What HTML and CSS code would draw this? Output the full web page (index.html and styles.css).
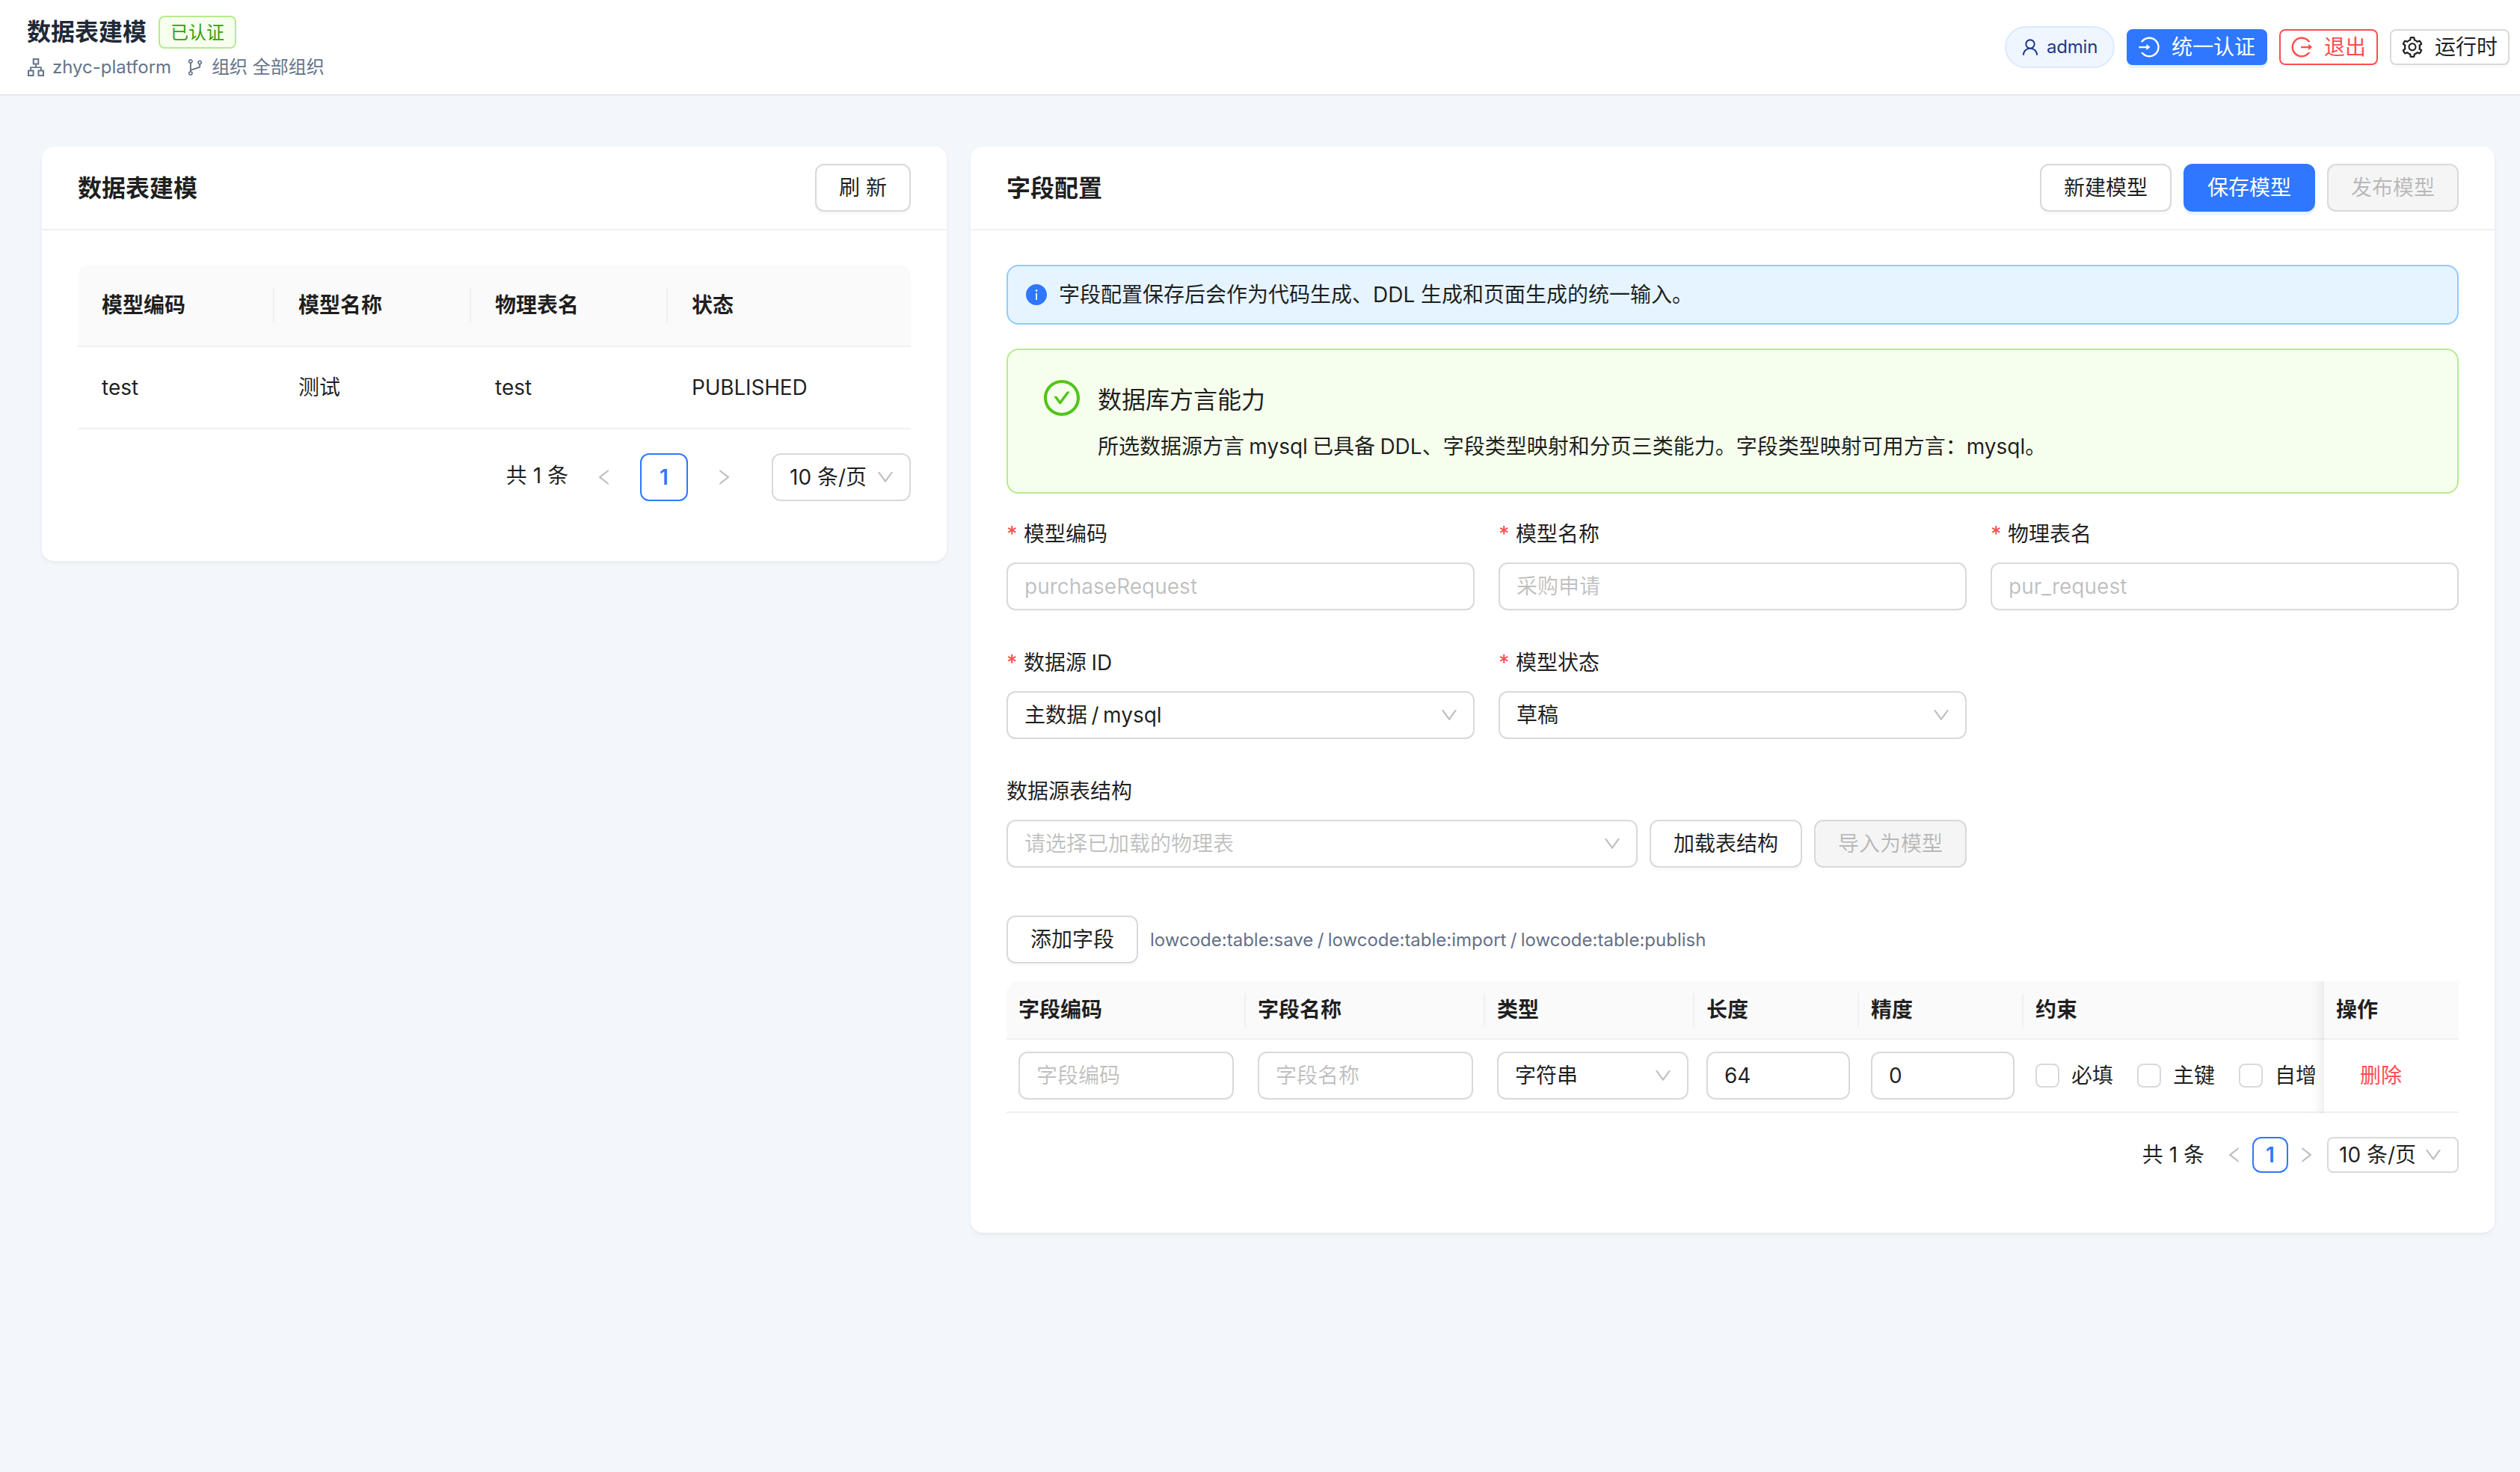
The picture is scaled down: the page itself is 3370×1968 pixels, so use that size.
FILE: index.html
```html
<!DOCTYPE html>
<html lang="zh-CN">
<head>
<meta charset="utf-8">
<title>数据表建模</title>
<link rel="stylesheet" href="styles.css">
</head>
<body>
<svg class="sprite" aria-hidden="true">
  <symbol id="i-down" viewBox="64 64 896 896"><path d="M884 256h-75c-5.1 0-9.9 2.5-12.9 6.6L512 654.2 227.9 262.6c-3-4.1-7.8-6.6-12.9-6.6h-75c-6.5 0-10.3 7.4-6.5 12.7l352.6 486.1c12.8 17.6 39 17.6 51.7 0l352.6-486.1c3.9-5.3.1-12.7-6.4-12.7z"/></symbol>
  <symbol id="i-left" viewBox="64 64 896 896"><path d="M724 218.3V141c0-6.7-7.7-10.4-12.9-6.3L260.3 486.8a31.86 31.86 0 000 50.3l450.8 352.1c5.3 4.1 12.9.4 12.9-6.3v-77.3c0-4.9-2.3-9.6-6.1-12.6l-360-281 360-281.1c3.8-3 6.1-7.7 6.1-12.6z"/></symbol>
  <symbol id="i-right" viewBox="64 64 896 896"><path d="M765.7 486.8L314.9 134.7A7.97 7.97 0 00302 141v77.3c0 4.9 2.3 9.6 6.1 12.6l360 281.1-360 281.1c-3.9 3-6.1 7.7-6.1 12.6V883c0 6.7 7.7 10.4 12.9 6.3l450.8-352.1a31.96 31.96 0 000-50.4z"/></symbol>
  <symbol id="i-info" viewBox="64 64 896 896"><path d="M512 64C264.6 64 64 264.6 64 512s200.6 448 448 448 448-200.6 448-448S759.4 64 512 64zm32 664c0 4.4-3.6 8-8 8h-48c-4.4 0-8-3.6-8-8V456c0-4.4 3.6-8 8-8h48c4.4 0 8 3.6 8 8v272zm-32-344a48.01 48.01 0 010-96 48.01 48.01 0 010 96z"/></symbol>
  <symbol id="i-check" viewBox="64 64 896 896"><path d="M699 353h-46.9c-10.2 0-19.9 4.9-25.9 13.3L469 584.3l-71.2-98.8c-6-8.3-15.6-13.3-25.9-13.3H325c-6.5 0-10.3 7.4-6.5 12.7l124.6 172.8a31.8 31.8 0 0051.7 0l210.6-292c3.9-5.3.1-12.7-6.4-12.7z"/><path d="M512 64C264.6 64 64 264.6 64 512s200.6 448 448 448 448-200.6 448-448S759.4 64 512 64zm0 820c-205.4 0-372-166.6-372-372s166.6-372 372-372 372 166.6 372 372-166.6 372-372 372z"/></symbol>
  <symbol id="i-user" viewBox="64 64 896 896"><path d="M858.5 763.6a374 374 0 00-80.6-119.5 375.63 375.63 0 00-119.5-80.6c-.4-.2-.8-.3-1.2-.5C719.5 518 760 444.7 760 362c0-137-111-248-248-248S264 225 264 362c0 82.7 40.5 156 102.8 201.1-.4.2-.8.3-1.2.5-44.8 18.9-85 46-119.5 80.6a375.63 375.63 0 00-80.6 119.5A371.7 371.7 0 00136 901.8a8 8 0 008 8.2h60c4.4 0 7.9-3.5 8-7.8 2-77.2 33-149.5 87.8-204.3 56.7-56.7 132-87.9 212.2-87.9s155.5 31.2 212.2 87.9C779 752.7 810 825 812 902.2c.1 4.4 3.6 7.8 8 7.8h60a8 8 0 008-8.2c-1-47.8-10.9-94.3-29.5-138.2zM512 534c-45.9 0-89.1-17.9-121.6-50.4S340 407.9 340 362c0-45.9 17.9-89.1 50.4-121.6S466.1 190 512 190s89.1 17.9 121.6 50.4S684 316.1 684 362c0 45.9-17.9 89.1-50.4 121.6S557.9 534 512 534z"/></symbol>
  <symbol id="i-login" viewBox="64 64 896 896"><path d="M521.7 82c-152.5-.4-286.7 78.5-363.4 197.7-3.4 5.3.4 12.3 6.7 12.3h70.3c4.8 0 9.3-2.1 12.3-5.8 7-8.5 14.5-16.7 22.4-24.5 32.6-32.5 70.5-58.1 112.7-75.9 43.6-18.4 90-27.8 137.9-27.8 47.9 0 94.3 9.3 137.9 27.8 42.2 17.8 80.1 43.4 112.7 75.9 32.6 32.5 58.1 70.4 76 112.5C865.7 417.8 875 464.1 875 512c0 47.9-9.4 94.2-27.8 137.8-17.8 42.1-43.4 80-76 112.5s-70.5 58.1-112.7 75.9A352.8 352.8 0 01520.6 866c-47.9 0-94.3-9.4-137.9-27.8A353.84 353.84 0 01270 762.3c-7.9-7.9-15.3-16.1-22.4-24.5-3-3.7-7.6-5.8-12.3-5.8H165c-6.3 0-10.2 7-6.7 12.3C234.9 863.2 368.5 942 520.6 942c236.2 0 428-190.1 430.4-425.6C953.4 277.1 761.3 82.6 521.7 82zM395.02 624v-76h-314c-4.4 0-8-3.6-8-8v-56c0-4.4 3.6-8 8-8h314v-76c0-6.7 7.8-10.5 13-6.3l141.9 112a8 8 0 010 12.6l-141.9 112c-5.2 4.1-13 .4-13-6.3z"/></symbol>
  <symbol id="i-logout" viewBox="64 64 896 896"><path d="M868 732h-70.3c-4.8 0-9.3 2.1-12.3 5.8-7 8.5-14.5 16.7-22.4 24.5a353.84 353.84 0 01-112.7 75.9A352.8 352.8 0 01512.4 866c-47.9 0-94.3-9.4-137.9-27.8a353.84 353.84 0 01-112.7-75.9 353.28 353.28 0 01-76-112.5C167.3 606.2 158 559.9 158 512s9.4-94.2 27.8-137.8c17.8-42.1 43.4-80 76-112.5s70.5-58.1 112.7-75.9c43.6-18.4 90-27.8 137.9-27.8 47.9 0 94.3 9.3 137.9 27.8 42.2 17.8 80.1 43.4 112.7 75.9 7.9 7.9 15.3 16.1 22.4 24.5 3 3.7 7.6 5.8 12.3 5.8H868c6.3 0 10.2-7 6.7-12.3C798 160.5 663.8 81.6 511.3 82 271.7 82.6 79.6 277.1 82 516.4 84.4 751.9 276.2 942 512.4 942c152.1 0 285.7-78.8 362.3-197.7 3.4-5.3-.4-12.3-6.7-12.3zm88.9-226.3L815 393.7c-5.3-4.2-13-.4-13 6.3v76H488c-4.4 0-8 3.6-8 8v56c0 4.4 3.6 8 8 8h314v76c0 6.7 7.8 10.5 13 6.3l141.9-112a8 8 0 000-12.6z"/></symbol>
  <symbol id="i-setting" viewBox="64 64 896 896"><path d="M924.8 625.7l-65.5-56c3.1-19 4.7-38.4 4.7-57.8s-1.6-38.8-4.7-57.8l65.5-56a32.03 32.03 0 009.3-35.2l-.9-2.6a443.74 443.74 0 00-79.7-137.9l-1.8-2.1a32.12 32.12 0 00-35.1-9.5l-81.3 28.9c-30-24.6-63.5-44-99.7-57.6l-15.7-85a32.05 32.05 0 00-25.8-25.7l-2.7-.5c-52.1-9.4-106.9-9.4-159 0l-2.7.5a32.05 32.05 0 00-25.8 25.7l-15.8 85.4a351.86 351.86 0 00-99 57.4l-81.9-29.1a32 32 0 00-35.1 9.5l-1.8 2.1a446.02 446.02 0 00-79.7 137.9l-.9 2.6c-4.5 12.5-.8 26.5 9.3 35.2l66.3 56.6c-3.1 18.8-4.6 38-4.6 57.1 0 19.2 1.5 38.4 4.6 57.1L99 625.5a32.03 32.03 0 00-9.3 35.2l.9 2.6c18.1 50.4 44.9 96.9 79.7 137.9l1.8 2.1a32.12 32.12 0 0035.1 9.5l81.9-29.1c29.8 24.5 63.1 43.9 99 57.4l15.8 85.4a32.05 32.05 0 0025.8 25.7l2.7.5a449.4 449.4 0 00159 0l2.7-.5a32.05 32.05 0 0025.8-25.7l15.7-85a350 350 0 0099.7-57.6l81.3 28.9a32 32 0 0035.1-9.5l1.8-2.1c34.8-41.1 61.6-87.5 79.7-137.9l.9-2.6c4.5-12.3.8-26.3-9.3-35zM788.3 465.9c2.5 15.1 3.8 30.6 3.8 46.1s-1.3 31-3.8 46.1l-6.6 40.1 74.7 63.9a370.03 370.03 0 01-42.6 73.6L721 702.8l-31.4 25.8c-23.9 19.6-50.5 35-79.3 45.8l-38.1 14.3-17.9 97a377.5 377.5 0 01-85 0l-17.9-97.2-37.8-14.5c-28.5-10.8-55-26.2-78.7-45.7l-31.4-25.9-93.4 33.2c-17-22.9-31.2-47.6-42.6-73.6l75.5-64.5-6.5-40c-2.4-14.9-3.7-30.3-3.7-45.5 0-15.3 1.2-30.6 3.7-45.5l6.5-40-75.5-64.5c11.3-26.1 25.6-50.7 42.6-73.6l93.4 33.2 31.4-25.9c23.7-19.5 50.2-34.9 78.7-45.7l37.9-14.3 17.9-97.2c28.1-3.2 56.8-3.2 85 0l17.9 97 38.1 14.3c28.7 10.8 55.4 26.2 79.3 45.8l31.4 25.8 92.8-32.9c17 22.9 31.2 47.6 42.6 73.6L781.8 426l6.5 39.9zM512 326c-97.2 0-176 78.8-176 176s78.8 176 176 176 176-78.8 176-176-78.8-176-176-176zm79.2 255.2A111.6 111.6 0 01512 614c-29.9 0-58-11.7-79.2-32.8A111.6 111.6 0 01400 502c0-29.9 11.7-58 32.8-79.2C454 401.6 482.1 390 512 390c29.9 0 58 11.6 79.2 32.8A111.6 111.6 0 01624 502c0 29.9-11.7 58-32.8 79.2z"/></symbol>
  <symbol id="i-apartment" viewBox="64 64 896 896"><path d="M908 640H804V488c0-4.4-3.6-8-8-8H548v-96h108c8.8 0 16-7.2 16-16V80c0-8.8-7.2-16-16-16H368c-8.8 0-16 7.2-16 16v288c0 8.8 7.2 16 16 16h108v96H228c-4.4 0-8 3.6-8 8v152H116c-8.8 0-16 7.2-16 16v288c0 8.8 7.2 16 16 16h288c8.8 0 16-7.2 16-16V656c0-8.8-7.2-16-16-16H292v-88h440v88H620c-8.8 0-16 7.2-16 16v288c0 8.8 7.2 16 16 16h288c8.8 0 16-7.2 16-16V656c0-8.8-7.2-16-16-16zm-564 76v168H176V716h168zm84-408V140h168v168H428zm420 576H680V716h168v168z"/></symbol>
  <symbol id="i-branches" viewBox="64 64 896 896"><path d="M740 161c-61.8 0-112 50.2-112 112 0 50.1 33.1 92.6 78.5 106.9v95.9L320 602.4V318.1c44.2-15 76-56.9 76-106.1 0-61.8-50.2-112-112-112s-112 50.2-112 112c0 49.2 31.8 91 76 106.1V706c-44.2 15-76 56.9-76 106.1 0 61.8 50.2 112 112 112s112-50.2 112-112c0-49.2-31.8-91-76-106.1v-27.8l423.5-138.7a50.52 50.52 0 0034.9-48.2V378.2c42.9-15.8 73.6-57 73.6-105.2 0-61.8-50.2-112-112-112zm-504 51a48.01 48.01 0 0196 0 48.01 48.01 0 01-96 0zm96 600a48.01 48.01 0 01-96 0 48.01 48.01 0 0196 0zm408-491a48.01 48.01 0 010-96 48.01 48.01 0 010 96z"/></symbol>
</svg>

<header class="topbar">
  <div class="brand">
    <div class="brand-row">
      <h1 class="brand-title">数据表建模</h1>
      <span class="tag">已认证</span>
    </div>
    <div class="meta">
      <span class="meta-item"><svg class="icon"><use href="#i-apartment"/></svg><span>zhyc-platform</span></span>
      <span class="meta-item"><svg class="icon"><use href="#i-branches"/></svg><span>组织 全部组织</span></span>
    </div>
  </div>
  <div class="actions">
    <span class="user"><svg class="icon"><use href="#i-user"/></svg><span>admin</span></span>
    <button class="btn btn-sm btn-primary"><svg class="icon"><use href="#i-login"/></svg><span>统一认证</span></button>
    <button class="btn btn-sm btn-danger"><svg class="icon"><use href="#i-logout"/></svg><span>退出</span></button>
    <button class="btn btn-sm"><svg class="icon"><use href="#i-setting"/></svg><span>运行时</span></button>
  </div>
</header>

<main class="page">
  <section class="card">
    <div class="card-head">
      <h2 class="card-title">数据表建模</h2>
      <button class="btn">刷 新</button>
    </div>
    <div class="card-body">
      <div class="table models">
        <div class="row head"><span class="cell">模型编码</span><span class="cell">模型名称</span><span class="cell">物理表名</span><span class="cell">状态</span></div>
        <div class="row"><span class="cell">test</span><span class="cell">测试</span><span class="cell">test</span><span class="cell status">PUBLISHED</span></div>
      </div>
      <div class="pager">
        <span class="total">共 1 条</span>
        <span class="nav"><svg class="icon"><use href="#i-left"/></svg></span>
        <span class="num">1</span>
        <span class="nav"><svg class="icon"><use href="#i-right"/></svg></span>
        <div class="control size"><span>10 条/页</span><svg class="icon"><use href="#i-down"/></svg></div>
      </div>
    </div>
  </section>

  <section class="card">
    <div class="card-head">
      <h2 class="card-title">字段配置</h2>
      <div class="btns">
        <button class="btn">新建模型</button>
        <button class="btn btn-primary">保存模型</button>
        <button class="btn btn-disabled">发布模型</button>
      </div>
    </div>
    <div class="card-body">
      <div class="alert alert-info">
        <svg class="icon"><use href="#i-info"/></svg>
        <span>字段配置保存后会作为代码生成、DDL 生成和页面生成的统一输入。</span>
      </div>
      <div class="alert alert-success">
        <svg class="icon"><use href="#i-check"/></svg>
        <div>
          <div class="alert-title">数据库方言能力</div>
          <div class="alert-desc">所选数据源方言 mysql 已具备 DDL、字段类型映射和分页三类能力。字段类型映射可用方言：mysql。</div>
        </div>
      </div>

      <div class="form">
        <div class="field"><div class="label required">模型编码</div><div class="control ghost">purchaseRequest</div></div>
        <div class="field"><div class="label required">模型名称</div><div class="control ghost">采购申请</div></div>
        <div class="field"><div class="label required">物理表名</div><div class="control ghost">pur_request</div></div>
        <div class="field"><div class="label required">数据源 ID</div><div class="control"><span class="source">主数据 / mysql</span><svg class="icon"><use href="#i-down"/></svg></div></div>
        <div class="field"><div class="label required">模型状态</div><div class="control"><span>草稿</span><svg class="icon"><use href="#i-down"/></svg></div></div>
        <div class="field wide">
          <div class="label">数据源表结构</div>
          <div class="compact">
            <div class="control ghost"><span>请选择已加载的物理表</span><svg class="icon"><use href="#i-down"/></svg></div>
            <button class="btn">加载表结构</button>
            <button class="btn btn-disabled">导入为模型</button>
          </div>
        </div>
      </div>

      <div class="toolbar">
        <button class="btn">添加字段</button>
        <span class="hint">lowcode:table:save / lowcode:table:import / lowcode:table:publish</span>
      </div>

      <div class="table fields">
        <div class="row head"><span class="cell">字段编码</span><span class="cell">字段名称</span><span class="cell">类型</span><span class="cell">长度</span><span class="cell">精度</span><span class="cell last">约束</span><span class="cell fixed">操作</span></div>
        <div class="row">
          <div class="cell"><div class="control ghost">字段编码</div></div>
          <div class="cell"><div class="control ghost">字段名称</div></div>
          <div class="cell"><div class="control type"><span>字符串</span><svg class="icon"><use href="#i-down"/></svg></div></div>
          <div class="cell"><div class="control number">64</div></div>
          <div class="cell"><div class="control number">0</div></div>
          <div class="cell last checks">
            <label class="check"><i class="box"></i><span>必填</span></label>
            <label class="check"><i class="box"></i><span>主键</span></label>
            <label class="check"><i class="box"></i><span>自增</span></label>
          </div>
          <div class="cell fixed"><a class="remove">删除</a></div>
        </div>
      </div>
      <div class="pager small">
        <span class="total">共 1 条</span>
        <span class="nav"><svg class="icon"><use href="#i-left"/></svg></span>
        <span class="num">1</span>
        <span class="nav"><svg class="icon"><use href="#i-right"/></svg></span>
        <div class="control size"><span>10 条/页</span><svg class="icon"><use href="#i-down"/></svg></div>
      </div>
    </div>
  </section>
</main>
</body>
</html>
```
FILE: styles.css
```css
* { box-sizing: border-box; }

body {
  margin: 0;
  min-height: 1968px;
  background: #f3f6fb;
  color: rgba(0, 0, 0, 0.88);
  font: 28px/44px Inter, "Noto Sans CJK SC", sans-serif;
}

h1, h2 { margin: 0; font-size: 32px; font-weight: 600; }

.sprite { display: none; }

.icon {
  display: block;
  flex: none;
  width: 24px;
  height: 24px;
  fill: currentColor;
}

/* Top bar */
.topbar {
  display: flex;
  justify-content: space-between;
  height: 128px;
  padding: 21px 14px 0 36px;
  background: #fff;
  border-bottom: 2px solid #e5e7eb;
}

.brand-row { display: flex; align-items: center; gap: 16px; }

.brand-title { color: #1f2937; line-height: 44px; }

.tag {
  height: 44px;
  padding: 0 14px;
  border: 2px solid #b7eb8f;
  border-radius: 8px;
  background: #f6ffed;
  color: #389e0d;
  font-size: 24px;
  line-height: 41px;
}

.meta {
  display: flex;
  gap: 20px;
  margin-top: 6px;
  color: #64748b;
  font-size: 24px;
  line-height: 38px;
}

.meta-item { display: flex; align-items: center; gap: 10px; }

.actions {
  display: flex;
  align-items: center;
  gap: 16px;
  height: 84px;
}

.user {
  display: flex;
  align-items: center;
  gap: 10px;
  width: 147px;
  height: 56px;
  padding: 0 20px;
  border: 2px solid #dbeafe;
  border-radius: 28px;
  background: #eff6ff;
  color: #1e3a8a;
  font-size: 24px;
  letter-spacing: -0.2px;
}

/* Buttons */
.btn {
  display: flex;
  align-items: center;
  justify-content: center;
  gap: 16px;
  height: 64px;
  padding: 0 30px;
  border: 2px solid #d9d9d9;
  border-radius: 12px;
  background: #fff;
  box-shadow: 0 4px 0 rgba(0, 0, 0, 0.02);
  color: inherit;
  font: inherit;
  white-space: nowrap;
}

.btn-sm { height: 48px; padding: 0 14px; border-radius: 8px; }

.btn-sm .icon { width: 28px; height: 28px; }

.btn-primary {
  border-color: #2f77ff;
  background: #2f77ff;
  box-shadow: 0 4px 0 rgba(5, 145, 255, 0.1);
  color: #fff;
}

.btn-danger { border-color: #ff4d4f; box-shadow: none; color: #ff4d4f; }

.btn-disabled {
  background: #f5f5f5;
  box-shadow: none;
  color: rgba(0, 0, 0, 0.25);
}

.btns { display: flex; gap: 16px; }

/* Cards */
.page {
  display: grid;
  grid-template-columns: 1210px 2038px;
  gap: 32px;
  align-items: start;
  padding: 68px 34px 0 56px;
}

.card {
  border-radius: 16px;
  background: #fff;
  box-shadow: 0 2px 4px rgba(0, 0, 0, 0.03), 0 2px 12px -2px rgba(0, 0, 0, 0.02), 0 4px 8px rgba(0, 0, 0, 0.02);
}

.card-head {
  display: flex;
  align-items: center;
  justify-content: space-between;
  height: 112px;
  padding: 0 48px;
  border-bottom: 2px solid #f0f0f0;
}

.card-title { padding-top: 2px; }

.card-body { padding: 46px 48px 48px; }

/* Tables */
.row { display: grid; border-bottom: 2px solid #f0f0f0; }

.row .cell { min-width: 0; }

.head {
  border-radius: 16px 16px 0 0;
  background: #fafafa;
  font-weight: 600;
}

.head .cell {
  display: flex;
  align-items: center;
  justify-content: space-between;
}

.head .cell:not(:last-child):not(.last)::after {
  content: "";
  width: 2px;
  height: 45px;
  margin-block: -1px;
  background: #f0f0f0;
}

.models .row { grid-template-columns: 263px 263px 263px 1fr; }

.models .cell { padding: 32px 0 32px 32px; }

.status { letter-spacing: -0.2px; }

.fields .row { grid-template-columns: 320px 320px 280px 220px 220px 402px 180px; }

.fields .head { border-radius: 16px 0 0 0; }

.fields .cell { padding: 16px; }

.fields .head .cell { padding-right: 0; }

.fields .type { width: 256px; }

.fields .number { width: 192px; }

.fields .last {
  padding-right: 0;
  margin-bottom: -2px;
  background: linear-gradient(to left, rgba(5, 5, 5, 0.06), rgba(5, 5, 5, 0.015) 10px, transparent 20px);
}

.fields .head .last { padding-bottom: 18px; }

.fields .checks { display: flex; align-items: center; gap: 16px; padding-bottom: 18px; }

.check {
  display: flex;
  align-items: center;
  gap: 16px;
  padding-right: 16px;
  white-space: nowrap;
}

.box {
  width: 32px;
  height: 32px;
  border: 2px solid #d9d9d9;
  border-radius: 8px;
  background: #fff;
}

.fields .fixed { display: flex; align-items: center; }

.remove { padding-left: 32px; color: #ff4d4f; }

/* Pagination */
.pager {
  display: flex;
  justify-content: flex-end;
  gap: 16px;
  margin: 32px 0;
  line-height: 60px;
}

.nav {
  display: flex;
  align-items: center;
  justify-content: center;
  width: 64px;
  height: 64px;
  color: rgba(0, 0, 0, 0.25);
}

.num {
  width: 64px;
  height: 64px;
  border: 2px solid #2f77ff;
  border-radius: 12px;
  color: #2f77ff;
  font-weight: 600;
  text-align: center;
}

.pager .size { width: 186px; margin-left: 16px; }

.small { gap: 0; line-height: 44px; }

.small .total { margin-right: 16px; line-height: 48px; }

.small .nav, .small .num { width: 48px; height: 48px; }

.pager.small .size {
  width: 176px;
  height: 48px;
  margin-left: 4px;
  padding: 0 20px 0 14px;
  border-radius: 8px;
}

/* Alerts */
.alert { display: flex; border: 2px solid; border-radius: 16px; }

.alert-info {
  align-items: center;
  gap: 16px;
  height: 80px;
  padding: 0 24px;
  border-color: #91caff;
  background: #e6f4ff;
}

.alert-info .icon { width: 28px; height: 28px; color: #2f77ff; }

.alert-success {
  gap: 24px;
  height: 194px;
  margin-top: 32px;
  padding: 40px 48px;
  border-color: #b7eb8f;
  background: #f6ffed;
}

.alert-success .icon { width: 48px; height: 48px; color: #52c41a; }

.alert-title { margin-bottom: 14px; font-size: 32px; line-height: 53px; }

.alert-desc { word-spacing: -1.6px; }

/* Form */
.form {
  display: grid;
  grid-template-columns: repeat(3, 1fr);
  gap: 48px 32px;
  margin-top: 32px;
}

.wide { grid-column: 1 / 3; }

.label { margin-bottom: 16px; word-spacing: -1.5px; }

.required::before {
  content: "*";
  display: inline-block;
  width: 15px;
  margin-right: 8px;
  color: #ff4d4f;
  font-weight: 500;
}

.control {
  display: flex;
  align-items: center;
  justify-content: space-between;
  height: 64px;
  padding: 0 20px 0 22px;
  border: 2px solid #d9d9d9;
  border-radius: 12px;
  background: #fff;
  white-space: nowrap;
}

.field .control { padding-left: 20px; padding-left: 22px; }

.control .icon { color: rgba(0, 0, 0, 0.25); }

.ghost { color: rgba(0, 0, 0, 0.25); }

.source { word-spacing: -2.4px; }

.compact { display: flex; gap: 16px; }

.compact .control { flex: 1; }

.toolbar {
  display: flex;
  align-items: center;
  gap: 16px;
  margin: 64px 0 24px;
}

.hint {
  padding-top: 2px;
  color: #667085;
  font-size: 24px;
  word-spacing: -1.4px;
}
```
